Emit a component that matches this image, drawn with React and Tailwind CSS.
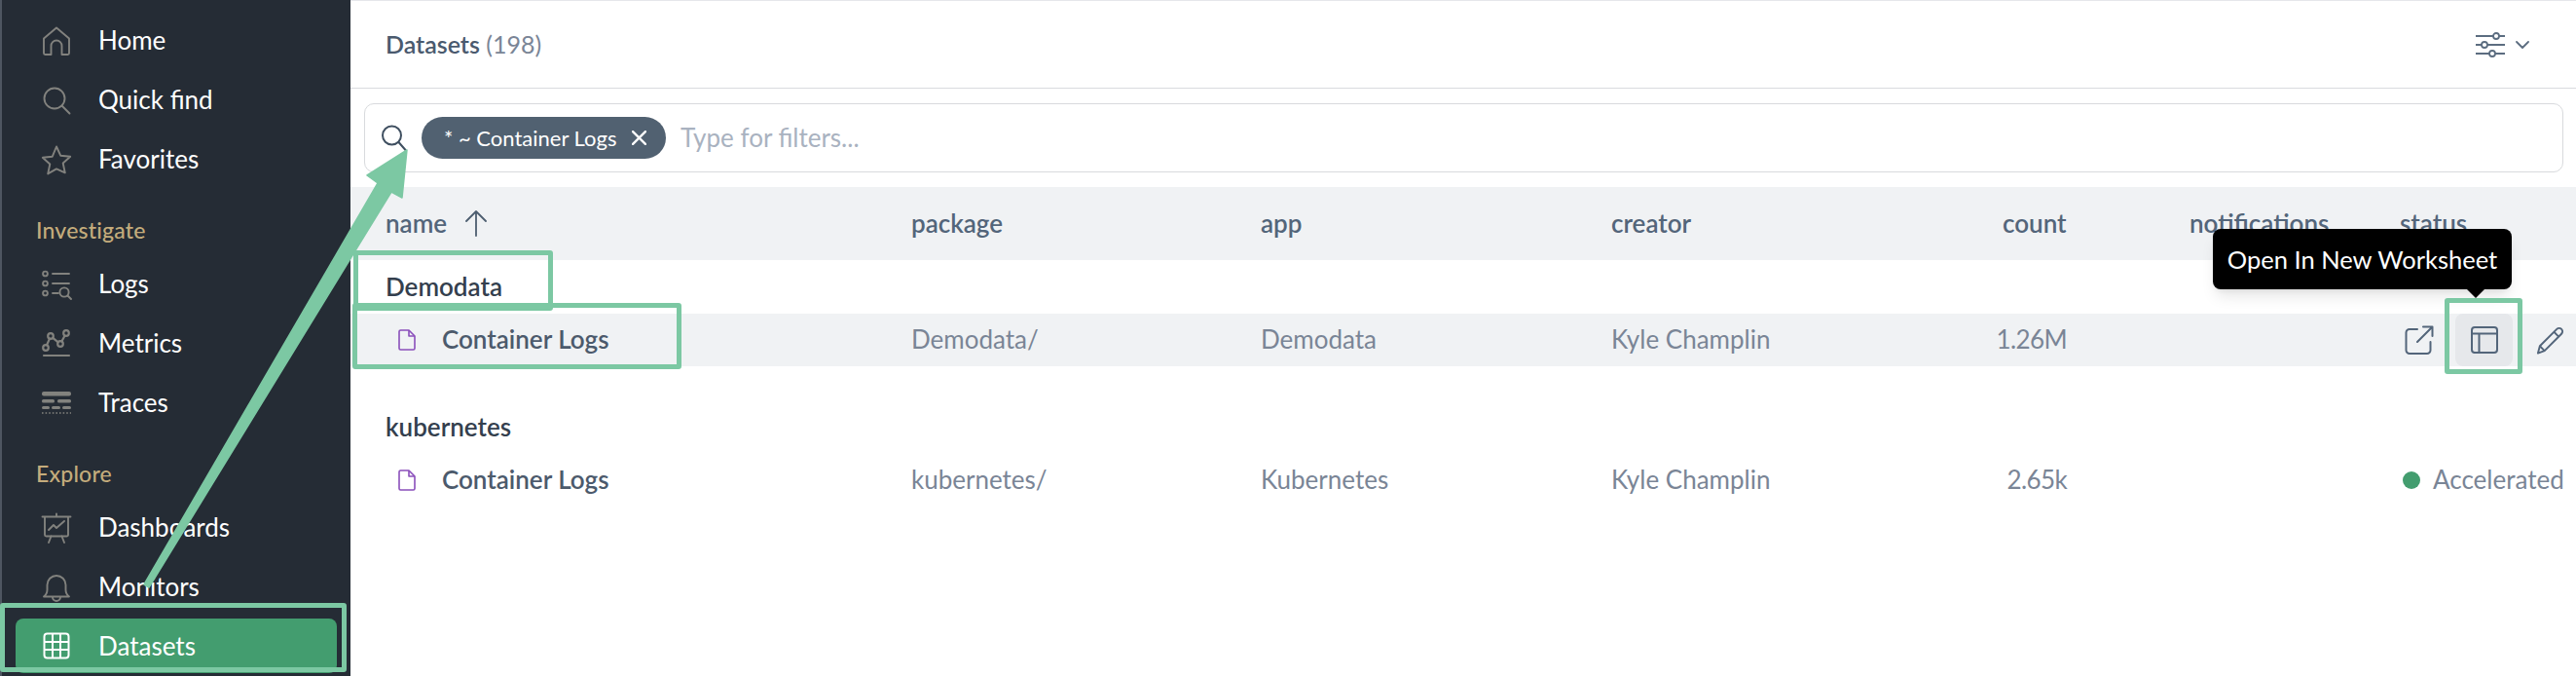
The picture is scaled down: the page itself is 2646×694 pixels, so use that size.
import React from 'react';

const font = { fontFamily: 'Lato, "Open Sans", sans-serif' };

function NavIcon({ children, stroke = '#82827e', width = 1.9 }) {
  return (
    <svg viewBox="0 0 32 32" className="w-8 h-8" fill="none" stroke={stroke} strokeWidth={width} strokeLinecap="round" strokeLinejoin="round">
      {children}
    </svg>
  );
}

const HomeIcon = () => (
  <NavIcon>
    <path d="M3 13.500 16 2.500l13 11v15a1.500 1.500 0 0 1-1.500 1.500H21.500v-9a5.500 5.500 0 0 0-11 0v9H4.500A1.500 1.500 0 0 1 3 28.500z" />
  </NavIcon>
);
const SearchIcon = () => (
  <NavIcon>
    <circle cx="14" cy="14" r="10.500" />
    <path d="m21.500 21.500 8 8" />
  </NavIcon>
);
const StarIcon = () => (
  <NavIcon>
    <path d="m16 2.500 4.200 9.200 10 1.100-7.500 6.700 2.100 9.900L16 25.400l-8.800 5 2.100-9.900-7.500-6.700 10-1.100z" />
  </NavIcon>
);
const LogsIcon = () => (
  <NavIcon>
    <circle cx="4.500" cy="5" r="2.400" />
    <circle cx="4.500" cy="15" r="2.400" />
    <circle cx="4.500" cy="25" r="2.400" />
    <path d="M12 5h17M12 15h17M12 25h6" />
    <circle cx="24" cy="24" r="4.600" />
    <path d="m27.500 27.500 3.500 3.500" />
  </NavIcon>
);
const MetricsIcon = () => (
  <NavIcon width={2.2}>
    <circle cx="5" cy="20" r="2.800" />
    <circle cx="10" cy="8" r="2.800" />
    <circle cx="20" cy="16" r="2.800" />
    <circle cx="26" cy="5" r="2.800" />
    <path d="m6 17.300 3-6.700M12.200 9.800l5.600 4.500M21.400 13.600l3.200-6M3 28h26" />
  </NavIcon>
);
const TracesIcon = () => (
  <svg viewBox="0 0 32 26" className="w-8 h-[26px]" fill="#82827e">
    <rect x="1" y="1" width="30" height="4.500" rx="2" />
    <rect x="1" y="9" width="13" height="3.500" rx="1.500" />
    <rect x="17" y="9" width="14" height="3.500" rx="1.500" />
    <rect x="1" y="16" width="8" height="3" rx="1.500" />
    <rect x="11" y="16" width="9" height="3" rx="1.500" />
    <rect x="22" y="16" width="9" height="3" rx="1.500" />
    <path d="M1 23h30" stroke="#82827e" strokeWidth="1.600" strokeDasharray="1.600 2" fill="none" />
  </svg>
);
const DashboardsIcon = () => (
  <NavIcon>
    <path d="M1.500 4.500h29M16 1.500v3M4 4.500v18.500a1.500 1.500 0 0 0 1.500 1.500h21a1.500 1.500 0 0 0 1.500-1.500V4.500" />
    <path d="m8 18 5-5 3 3 8-7M10.500 24.500 8 31M21.500 24.500 24 31" />
  </NavIcon>
);
const BellIcon = () => (
  <NavIcon>
    <path d="M3 25.500c2.500-2 3.500-3.500 3.500-7v-5a9.500 9.500 0 0 1 19 0v5c0 3.500 1 5 3.500 7z" />
    <path d="M12 26a4 4 0 0 0 8 0" />
  </NavIcon>
);
const GridIcon = () => (
  <svg viewBox="0 0 28 28" className="w-7 h-7" fill="none" stroke="#ffffff" strokeWidth="2">
    <rect x="1.500" y="1.500" width="25" height="25" rx="3" />
    <path d="M10 1.500v25M18 1.500v25M1.500 10h25M1.500 18h25" />
  </svg>
);

function NavItem({ icon, label, active }) {
  return (
    <div className={`flex items-center h-[61px] ${active ? 'pt-[2px] pb-[3px]' : ''}`}>
      <div className={`flex items-center w-full h-full mx-[14px] rounded-lg ${active ? 'bg-[#439d6f]' : ''}`}>
        <div className="w-[85px] pl-[26px] flex items-center shrink-0">
          <div className="w-8 flex justify-center">{icon}</div>
        </div>
        <span className="text-[26px] text-white">{label}</span>
      </div>
    </div>
  );
}

function Heading({ children }) {
  return (
    <div className="h-[67px] flex items-end pb-[8px] pl-[35px] text-[23px] font-medium text-[#c4ac7c] tracking-[0.2px]">{children}</div>
  );
}

const DocIcon = () => (
  <svg viewBox="0 0 18 22" className="w-[18px] h-[22px]" fill="none" stroke="#8a4fbb" strokeWidth="1.600" strokeLinejoin="round">
    <path d="M2.500 1h8.500l6 6v12.500a1.500 1.500 0 0 1-1.500 1.500h-13A1.500 1.500 0 0 1 1 19.500v-17A1.500 1.500 0 0 1 2.500 1z" />
    <path d="M11 1v6h6" />
  </svg>
);

const ExternalIcon = () => (
  <svg viewBox="0 0 30 30" className="w-[30px] h-[30px]" fill="none" stroke="#53657a" strokeWidth="2" strokeLinecap="round" strokeLinejoin="round">
    <path d="M13 4H5a3.500 3.500 0 0 0-3.500 3.500v18A3.500 3.500 0 0 0 5 29h18a3.500 3.500 0 0 0 3.500-3.500V17" />
    <path d="M19 1.500h9.500V11M28 2 13 17" />
  </svg>
);
const WorksheetIcon = () => (
  <svg viewBox="0 0 28 28" className="w-[28px] h-[28px]" fill="none" stroke="#53657a" strokeWidth="2">
    <rect x="1" y="1" width="26" height="26" rx="3" />
    <path d="M1 7.500h26M8.500 7.500V27" />
  </svg>
);
const PencilIcon = () => (
  <svg viewBox="0 0 30 30" className="w-[29px] h-[29px]" fill="none" stroke="#53657a" strokeWidth="2" strokeLinejoin="round">
    <path d="M2 28.500 4 21 22 3a3.500 3.500 0 0 1 5 5L9 26z" />
    <path d="m19 6 5 5M4 21l5 5" />
  </svg>
);

const cols = 'grid grid-cols-[540px_359px_360px_402px_192px_216px_minmax(0,1fr)] pl-[36px] items-center';

function DataRow({ pkg, app, count, status, hovered }) {
  return (
    <div className={`${cols} h-[54px] text-[26px] text-[#7a8596] ${hovered ? 'bg-[#f0f2f4]' : ''}`}>
      <div className="flex items-center pl-[13px]">
        <DocIcon />
        <span className="ml-[27px] pb-[2px] font-semibold text-[#4c5a6c]">Container Logs</span>
      </div>
      <div className="pb-[2px]">{pkg}</div>
      <div className="pb-[2px]">{app}</div>
      <div className="pb-[2px]">Kyle Champlin</div>
      <div className="w-[66px] pb-[2px] flex justify-end whitespace-nowrap tracking-[-0.6px]">{count}</div>
      <div />
      <div className="h-full flex items-center">
        {status ? (
          <div className="flex items-center ml-[3px]">
            <span className="w-[18px] h-[18px] rounded-full bg-[#439d6f]" />
            <span className="ml-[13px] pb-[2px]">{status}</span>
          </div>
        ) : (
          <div className="h-full w-full flex items-center justify-end">
            <div className="w-[59px] h-full shrink-0 flex items-center justify-center"><ExternalIcon /></div>
            <div className="w-[59px] h-full shrink-0 ml-[8px] rounded-lg bg-[#e6e8eb] flex items-center justify-center"><WorksheetIcon /></div>
            <div className="w-[57px] h-full shrink-0 ml-[8px] pl-[3px] flex items-center justify-center"><PencilIcon /></div>
          </div>
        )}
      </div>
    </div>
  );
}

function GroupRow({ children, className }) {
  return <div className={`pl-[36px] text-[26px] font-semibold text-[#343f4e] flex items-center ${className}`}>{children}</div>;
}

export default function App() {
  return (
    <div className="relative flex w-full h-[694px] overflow-hidden bg-white" style={font}>
      {/* sidebar */}
      <aside className="w-[360px] shrink-0 h-full bg-[#252c35] border-l-2 border-[#4e5661] pt-[11px]">
        <NavItem icon={<HomeIcon />} label="Home" />
        <NavItem icon={<SearchIcon />} label="Quick find" />
        <NavItem icon={<StarIcon />} label="Favorites" />
        <Heading>Investigate</Heading>
        <NavItem icon={<LogsIcon />} label="Logs" />
        <NavItem icon={<MetricsIcon />} label="Metrics" />
        <NavItem icon={<TracesIcon />} label="Traces" />
        <Heading>Explore</Heading>
        <NavItem icon={<DashboardsIcon />} label="Dashboards" />
        <NavItem icon={<BellIcon />} label="Monitors" />
        <NavItem icon={<GridIcon />} label="Datasets" active />
      </aside>

      {/* main */}
      <main className="flex-1 min-w-0 border-t border-[#e5e7eb]">
        <div className="h-[90px] border-b border-[#d9dbdf] flex items-center justify-between pl-[36px] pr-[48px]">
          <div className="text-[25px] text-[#4a5a6e]">
            <span className="font-semibold">Datasets</span> <span className="text-[#7a8596]">(198)</span>
          </div>
          <div className="flex items-center gap-[11px]">
            <svg viewBox="0 0 30 26" className="w-[30px] h-[26px]" fill="none" stroke="#5c6d80" strokeWidth="1.800">
              <path d="M0 4h18M24 4h6M0 13h6M12 13h18M0 22h14M20 22h10" />
              <circle cx="21" cy="4" r="3" />
              <circle cx="9" cy="13" r="3" />
              <circle cx="17" cy="22" r="3" />
            </svg>
            <svg viewBox="0 0 14 8" className="w-[14px] h-[8px]" fill="none" stroke="#5c6d80" strokeWidth="1.800" strokeLinecap="round" strokeLinejoin="round">
              <path d="m1 1 6 6 6-6" />
            </svg>
          </div>
        </div>

        <div className="h-[101px] pt-[15px] pl-[14px] pr-[13px]">
          <div className="h-[71px] border border-[#d8dadd] rounded-[10px] flex items-center pl-[16px]">
            <svg viewBox="0 0 26 27" className="w-[27px] h-[27px]" fill="none" stroke="#3f4f60" strokeWidth="2" strokeLinecap="round">
              <circle cx="11" cy="11" r="9.500" />
              <path d="m18 18 7 8" />
            </svg>
            <div className="ml-[15px] h-[43px] w-[251px] rounded-full bg-[#516171] flex items-center pl-[23px] text-white text-[22px] whitespace-nowrap">
              <span>* ~ Container Logs</span>
              <svg viewBox="0 0 14 14" className="w-[15px] h-[15px] ml-[15px] shrink-0" fill="none" stroke="#ffffff" strokeWidth="2.200" strokeLinecap="round">
                <path d="m1 1 12 12M13 1 1 13" />
              </svg>
            </div>
            <span className="ml-[15px] text-[26px] text-[#a9b2c0]">Type for filters...</span>
          </div>
        </div>

        <div className={`${cols} h-[75px] bg-[#f0f2f4] text-[26px] font-semibold text-[#53657a]`}>
          <div className="flex items-center">
            name
            <svg viewBox="0 0 22 27" className="w-[24px] h-[27px] ml-[18px]" fill="none" stroke="#4d5e70" strokeWidth="1.800" strokeLinecap="round" strokeLinejoin="round">
              <path d="M11 26V1M1 11 11 1l10 10" />
            </svg>
          </div>
          <div>package</div>
          <div>app</div>
          <div>creator</div>
          <div>count</div>
          <div>notifications</div>
          <div>status</div>
        </div>

        <GroupRow className="h-[55px]">Demodata</GroupRow>
        <DataRow pkg="Demodata/" app="Demodata" count="1.26M" hovered />
        <GroupRow className="h-[90px] pt-[34px]">kubernetes</GroupRow>
        <DataRow pkg="kubernetes/" app="Kubernetes" count="2.65k" status="Accelerated" />
      </main>

      {/* tooltip */}
      <div className="absolute left-[2273px] top-[235px] w-[307px] h-[62px] rounded-lg bg-black text-white text-[25.5px] flex items-center justify-center shadow-lg whitespace-nowrap">
        Open In New Worksheet
        <span className="absolute left-[261px] top-[62px] w-0 h-0 border-x-[9px] border-x-transparent border-t-[9px] border-t-black" />
      </div>

      {/* annotations drawn on top of the screenshot */}
      <div className="absolute left-0 top-[619px] w-[356px] h-[71px] border-[5px] border-[#7cc8a3] rounded-[3px]" />
      <div className="absolute left-[363px] top-[257px] w-[205px] h-[62px] border-[5px] border-[#7cc8a3] rounded-[3px]" />
      <div className="absolute left-[362px] top-[311px] w-[338px] h-[68px] border-[5px] border-[#7cc8a3] rounded-[3px]" />
      <div className="absolute left-[2511px] top-[306px] w-[80px] h-[78px] border-[5px] border-[#7cc8a3] rounded-[3px]" />
      <svg className="absolute left-0 top-0 pointer-events-none" width="2646" height="694" viewBox="0 0 2646 694">
        <polygon points="148,600 153,603 402,197 413,203 418,154 377,180 388,188" fill="#7cc8a3" stroke="#7cc8a3" strokeWidth="1.500" strokeLinejoin="round" />
      </svg>
    </div>
  );
}
